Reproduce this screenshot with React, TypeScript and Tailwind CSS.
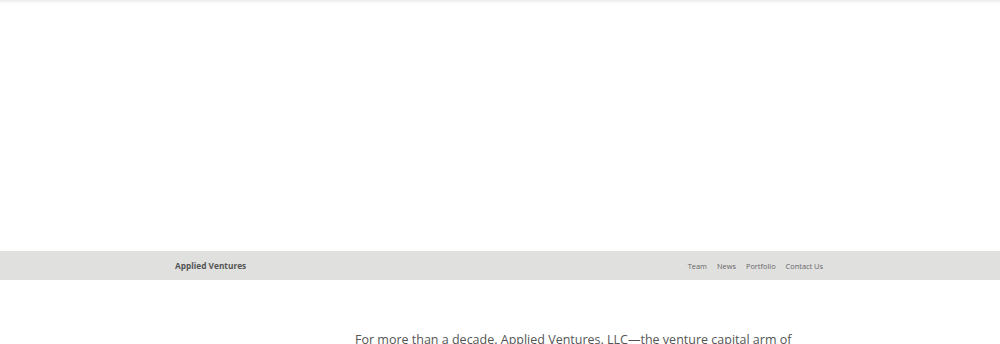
export default function App() {
  return (
    <div className="min-h-screen bg-white font-['Open_Sans',sans-serif]">
      <div className="h-[4px] bg-gradient-to-b from-[#ececec] to-white" />
      <div className="h-[247px]" />
      <nav className="h-[29px] bg-[#e0e0df]">
        <div className="mx-auto flex h-full w-[650px] items-center justify-between pt-[2px]">
          <span className="text-[8.3px] font-bold text-[#555]">Applied Ventures</span>
          <ul className="flex gap-[10px] pr-[2px] text-[7.4px] text-[#666]">
            <li>Team</li>
            <li>News</li>
            <li>Portfolio</li>
            <li>Contact Us</li>
          </ul>
        </div>
      </nav>
      <main className="mx-auto w-[650px] pl-[180px] pt-[50px]">
        <p className="text-[12.5px] leading-[20px] text-[#555]">
          For more than a decade. Applied Ventures. LLC—the venture capital arm of
          Applied Materials, Inc.—has invested in early-stage companies.
        </p>
      </main>
    </div>
  );
}
